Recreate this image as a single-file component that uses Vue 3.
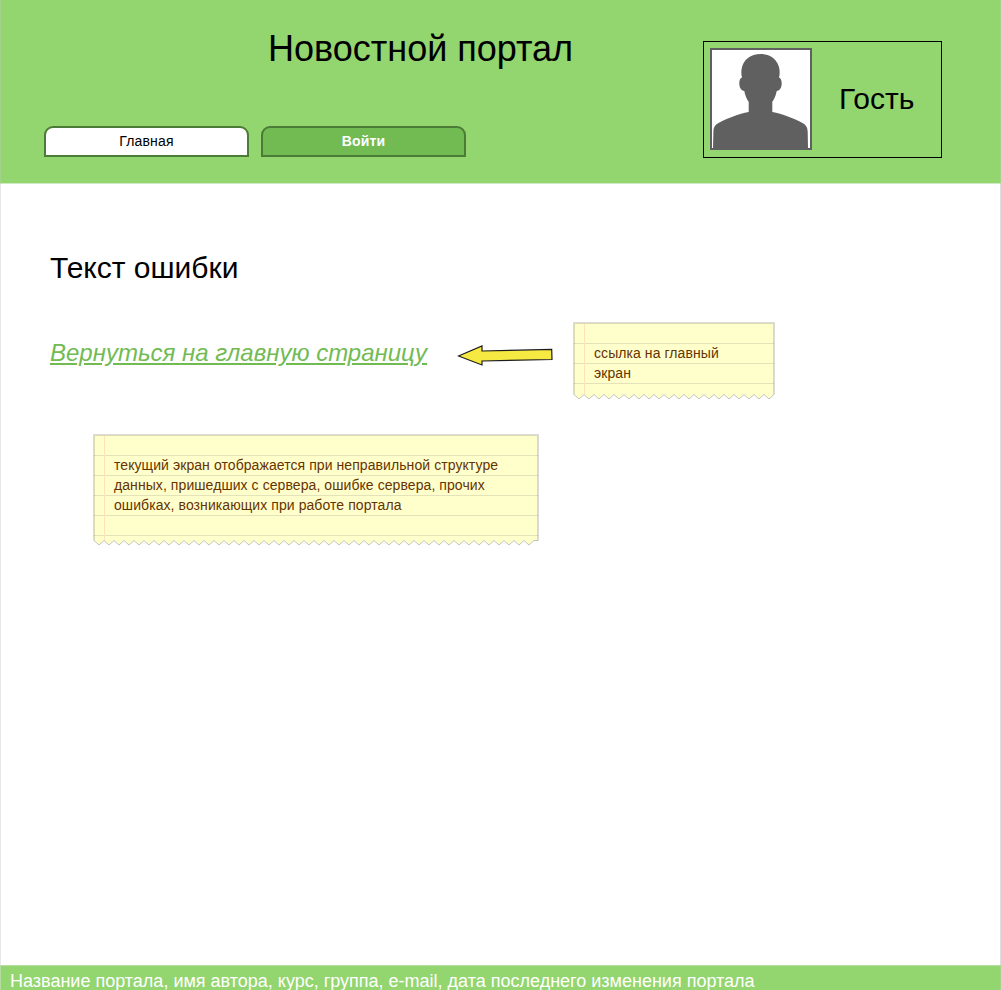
<script setup>
function makeNote(width, height, lines) {
  const base = height - 5.5
  let x = 0
  let edge = `M0 ${base}`
  while (x + 10 <= width) {
    edge += ` L${x + 5} ${base + 4.5} L${x + 10} ${base}`
    x += 10
  }
  edge += ` L${width} ${base}`
  return {
    width,
    height,
    base,
    lines,
    edge,
    rules: Array.from({ length: Math.floor(base / 20) }, (_, i) => (i + 1) * 20 + 0.5),
  }
}

const linkNote = makeNote(200, 77, ['ссылка на главный', 'экран'])
const screenNote = makeNote(444, 111, [
  'текущий экран отображается при неправильной структуре',
  'данных, пришедших с сервера, ошибке сервера, прочих',
  'ошибках, возникающих при работе портала',
])
</script>

<template>
  <div class="page">
    <header class="header">
      <div class="brand">
        <h1 class="title">Новостной портал</h1>
        <nav class="tabs">
          <a class="tab">Главная</a>
          <a class="tab active">Войти</a>
        </nav>
      </div>
      <div class="user">
        <svg class="avatar" viewBox="0 0 98 98">
          <path
            d="M1 98 L1.4 82 C1.5 77 3 75 6.500 73 C15 68.500 27 63.500 36.700 62 L36.700 51.700 C34.500 49 33 45 32.300 41 C29 41 27.300 37 27.300 33.500 C27.300 30.500 28.200 28 30 27.600 C29.200 25 29.200 22 29.600 19 C31 9.500 39 4 48.500 4 C58 4 66 9.500 67.400 19 C67.800 22 67.800 25 67 27.600 C68.800 28 69.700 30.500 69.700 33.500 C69.700 37 68 41 64.700 41 C64 45 62.500 49 60.300 51.700 L60.300 62 C70 63.500 82 68.500 90.500 73 C94 75 95.500 77 95.700 82 L96 98 Z"
            fill="#606060"
          />
        </svg>
        <span class="user-name">Гость</span>
      </div>
    </header>

    <main class="content">
      <h2 class="message">Текст ошибки</h2>
      <div class="return-row">
        <a class="return-link">Вернуться на главную страницу</a>
        <svg class="arrow" width="98" height="24" viewBox="0 0 98 24">
          <path d="M1.500 12 L25 2 L25 7 L94.700 5.400 L95 15.500 L25 17 L25 21 Z" fill="#f5e942" stroke="#1c1c1c" stroke-width="1.200" />
        </svg>
        <div v-for="note in [linkNote]" :key="note.width" class="note note-link">
          <svg class="paper" :width="note.width" :height="note.height">
            <path :d="`${note.edge} V0 H0 Z`" fill="#ffffcc" />
            <path v-for="y in note.rules" :key="y" :d="`M0 ${y} H${note.width}`" stroke="#e3e2bb" />
            <path :d="`M10.5 1 V${note.base}`" stroke="#ffe3b5" />
            <path :d="note.edge" fill="none" stroke="#bdbdb8" stroke-width="0.9" />
            <path :d="`M0 ${note.base} V0 H${note.width} V${note.base}`" fill="none" stroke="#000" stroke-opacity="0.14" stroke-width="2" />
          </svg>
          <p class="note-text"><span v-for="line in note.lines" :key="line">{{ line }}</span></p>
        </div>
      </div>
      <div v-for="note in [screenNote]" :key="note.width" class="note note-screen">
        <svg class="paper" :width="note.width" :height="note.height">
          <path :d="`${note.edge} V0 H0 Z`" fill="#ffffcc" />
          <path v-for="y in note.rules" :key="y" :d="`M0 ${y} H${note.width}`" stroke="#e3e2bb" />
          <path :d="`M10.5 1 V${note.base}`" stroke="#ffe3b5" />
          <path :d="note.edge" fill="none" stroke="#bdbdb8" stroke-width="0.9" />
          <path :d="`M0 ${note.base} V0 H${note.width} V${note.base}`" fill="none" stroke="#000" stroke-opacity="0.14" stroke-width="2" />
        </svg>
        <p class="note-text"><span v-for="line in note.lines" :key="line">{{ line }}</span></p>
      </div>
    </main>

    <footer class="footer">Название портала, имя автора, курс, группа, e-mail, дата последнего изменения портала</footer>
  </div>
</template>

<style>
body {
  margin: 0;
  background: #fff;
}
</style>

<style scoped>
.page {
  box-sizing: border-box;
  width: 1001px;
  height: 990px;
  overflow: hidden;
  display: flex;
  flex-direction: column;
  font-family: "Liberation Sans", Arial, sans-serif;
  color: #000;
}
.header {
  box-sizing: border-box;
  height: 184px;
  flex: none;
  display: flex;
  justify-content: space-between;
  align-items: flex-start;
  padding: 0 58px 0 43px;
  background: #93d56f;
  border-bottom: 1px solid #d0e9c3;
  border-left: 1px solid #a3d48a;
  border-right: 1px solid #a3d48a;
}
.brand {
  padding-top: 28px;
}
.title {
  margin: 0 0 0 224px;
  height: 98px;
  font-size: 36px;
  line-height: 42px;
  font-weight: 400;
  white-space: nowrap;
}
.tabs {
  display: flex;
  gap: 12px;
}
.tab {
  box-sizing: border-box;
  width: 205px;
  height: 31px;
  border: 2px solid #4b7b37;
  border-radius: 9px 9px 0 0;
  background: #fff;
  font-size: 14px;
  line-height: 27px;
  letter-spacing: 0.15px;
  text-align: center;
}
.tab.active {
  background: #72bb53;
  color: #fff;
  font-weight: 700;
}
.user {
  box-sizing: border-box;
  width: 239px;
  height: 117px;
  margin-top: 41px;
  padding: 6px;
  border: 1px solid #000;
  display: flex;
}
.avatar {
  width: 98px;
  height: 98px;
  border: 2px solid #606060;
  background: #fff;
}
.user-name {
  margin-left: 27px;
  margin-top: 34px;
  font-size: 30px;
  line-height: 34px;
}
.content {
  box-sizing: border-box;
  flex: 1;
  padding: 66px 0 0 49px;
  border-left: 1px solid #e8e8e8;
  border-right: 1px solid #dedede;
}
.message {
  margin: 0;
  height: 73px;
  font-size: 30px;
  line-height: 36px;
  font-weight: 400;
}
.return-row {
  display: flex;
  height: 112px;
}
.return-link {
  width: 407px;
  padding-top: 16px;
  font-size: 24px;
  line-height: 28px;
  font-style: italic;
  color: #72bb53;
  text-decoration: underline;
  white-space: nowrap;
}
.arrow {
  margin-top: 21px;
}
.note {
  position: relative;
}
.note-link {
  width: 200px;
  height: 77px;
  margin-left: 19px;
}
.note-screen {
  width: 444px;
  height: 111px;
  margin-left: 44px;
}
.paper {
  position: absolute;
  inset: 0;
  overflow: visible;
}
.note-text {
  position: relative;
  margin: 0;
  padding: 20px 0 0 20px;
  font-size: 14px;
  line-height: 20px;
  letter-spacing: 0.075px;
  color: #663300;
  white-space: nowrap;
}
.note-text span {
  display: block;
}
.footer {
  box-sizing: border-box;
  height: 25px;
  flex: none;
  padding: 4px 0 0 9px;
  background: #93d56f;
  border-top: 1px solid #b8dfa3;
  border-left: 1px solid #b4dba0;
  border-right: 1px solid #a3d48a;
  font-size: 18px;
  line-height: 22px;
  color: #fff;
  white-space: nowrap;
}
</style>
